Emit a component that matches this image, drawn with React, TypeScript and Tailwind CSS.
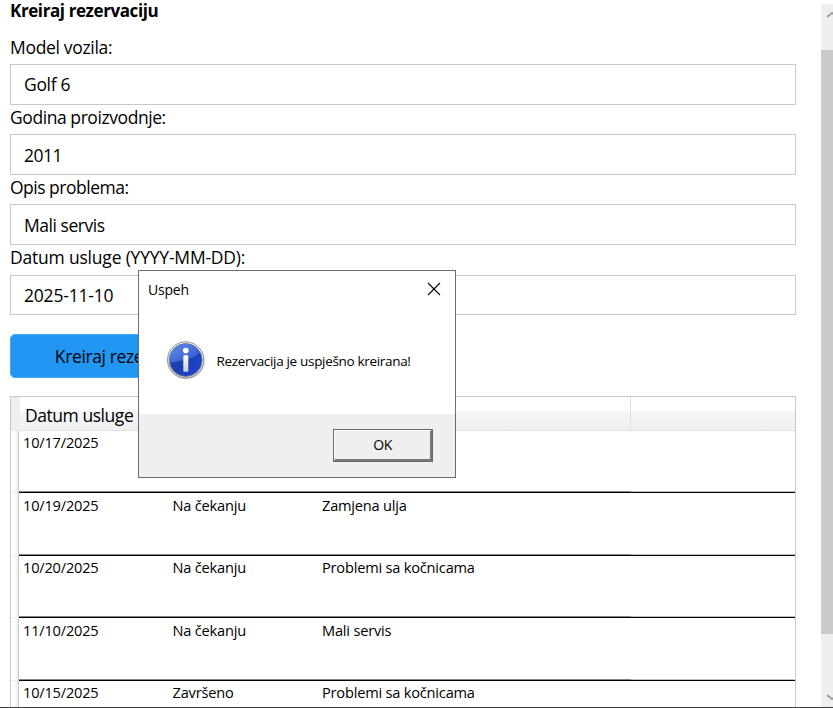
import React from "react";

const fields = [
  { label: "Model vozila:", value: "Golf 6", labelClass: "h-[28px] tracking-[-0.32px]", boxClass: "h-[41px] pb-[1px] tracking-[-0.32px]" },
  { label: "Godina proizvodnje:", value: "2011", labelClass: "h-[29px] pt-[1px] tracking-[-0.43px]", boxClass: "h-[41px] tracking-[-0.5px]" },
  { label: "Opis problema:", value: "Mali servis", labelClass: "h-[29px] pt-[1px] tracking-[-0.5px]", boxClass: "h-[41px] tracking-[-0.45px]" },
  { label: "Datum usluge (YYYY-MM-DD):", value: "2025-11-10", labelClass: "h-[30px] pt-[1px] tracking-[-0.2px]", boxClass: "h-[40px] tracking-[-0.2px]" },
];

const rows = [
  { date: "10/17/2025", status: "Na čekanju", text: "", height: "h-[62px]", pad: "pt-[1px]" },
  { date: "10/19/2025", status: "Na čekanju", text: "Zamjena ulja", height: "h-[63px]", pad: "pt-[2px]" },
  { date: "10/20/2025", status: "Na čekanju", text: "Problemi sa kočnicama", height: "h-[62px]", pad: "pt-[1px]" },
  { date: "11/10/2025", status: "Na čekanju", text: "Mali servis", height: "h-[63px]", pad: "pt-[2px]" },
  { date: "10/15/2025", status: "Završeno", text: "Problemi sa kočnicama", height: "h-[63px]", pad: "pt-[1px]" },
];

function InfoIcon() {
  return (
    <svg className="h-[40px] w-[40px] shrink-0" viewBox="0 0 40 40">
      <defs>
        <linearGradient id="ring" x1="0" y1="0" x2="0" y2="1">
          <stop offset="0" stopColor="#f4f4f4" />
          <stop offset="1" stopColor="#c4c4c4" />
        </linearGradient>
        <linearGradient id="blue" x1="0" y1="0" x2="1" y2="1">
          <stop offset="0" stopColor="#2a56c8" />
          <stop offset="0.5" stopColor="#1a3fae" />
          <stop offset="1" stopColor="#2145d8" />
        </linearGradient>
        <linearGradient id="shine" x1="0" y1="0" x2="1" y2="1">
          <stop offset="0" stopColor="#6490ec" />
          <stop offset="1" stopColor="#2850c4" />
        </linearGradient>
        <linearGradient id="stem" x1="0" y1="0" x2="0" y2="1">
          <stop offset="0" stopColor="#ffffff" />
          <stop offset="1" stopColor="#c9c9cf" />
        </linearGradient>
      </defs>
      <ellipse cx="20.7" cy="21.6" rx="18" ry="17.8" fill="#000" opacity="0.13" />
      <circle cx="19.7" cy="20" r="18.2" fill="url(#ring)" stroke="#858585" strokeWidth="0.9" />
      <circle cx="19.7" cy="20" r="16.4" fill="url(#blue)" stroke="#6a7590" strokeWidth="0.7" />
      <path d="M3.6 22.5A16.2 16.2 0 0 1 34 12.6Q28 20 3.6 22.5Z" fill="url(#shine)" />
      <circle cx="19.8" cy="10.6" r="2.8" fill="#fff" />
      <rect x="17.3" y="15.2" width="5" height="16.6" rx="0.7" fill="url(#stem)" />
    </svg>
  );
}

function Dialog() {
  return (
    <div className="absolute left-[138px] top-[270px] flex h-[208px] w-[318px] flex-col border border-[#6c6c6c] bg-white text-[14px] leading-[20px]">
      <div className="flex h-[37px] items-center justify-between pl-[9px] pr-[14px]">
        <span className="tracking-[-0.2px]">Uspeh</span>
        <svg className="mb-[2px] h-[14px] w-[14px]" viewBox="0 0 14 14" fill="none" stroke="#000" strokeWidth="1.1">
          <path d="M1 1L13 13M13 1L1 13" />
        </svg>
      </div>
      <div className="flex grow items-center pb-[2px] pl-[27px]">
        <InfoIcon />
        <span className="ml-[10.5px] mt-[2px] whitespace-nowrap text-[13.5px] tracking-[-0.32px]">Rezervacija je uspješno kreirana!</span>
      </div>
      <div className="flex h-[63px] justify-end bg-[#efefef] pr-[22px] pt-[15px]">
        <button className="h-[33px] w-[100px] border border-[#696969] bg-[#efefef] p-0">
          <span className="flex h-full items-center justify-center border-b-2 border-l border-r-2 border-t border-b-[#777] border-l-white border-r-[#777] border-t-white text-[14px] tracking-[-0.5px]">
            OK
          </span>
        </button>
      </div>
    </div>
  );
}

export default function App() {
  return (
    <div className="relative flex h-[708px] w-[833px] overflow-hidden border-b border-[#3c3c3c] bg-white font-['Open_Sans','Noto_Sans',sans-serif] text-black">
      <main className="w-[796px] pl-[10px]">
        <h1 className="h-[36px] whitespace-nowrap text-[17px] font-bold leading-[22px] tracking-[-0.4px]">Kreiraj rezervaciju</h1>
        {fields.map((f) => (
          <div key={f.label} className="text-[17.5px] leading-[22px]">
            <div className={`whitespace-nowrap ${f.labelClass}`}>{f.label}</div>
            <div className={`flex items-center border border-[#c8c8c8] pl-[13px] ${f.boxClass}`}>{f.value}</div>
          </div>
        ))}
        <button className="mt-[19px] block h-[44px] w-[229px] rounded-[5px] border border-[#42a5f5] bg-[#2196f3] text-[17.5px] tracking-[-0.38px]">
          Kreiraj rezervaciju
        </button>
        <section className="mt-[18px] h-[400px] border border-[#c8c8c8]">
          <div className="flex h-[34px]">
            <div className="w-[9px] bg-[#efefef]" />
            <div className="flex grow border-b border-[#dfe0e2] bg-[linear-gradient(to_bottom,#fff_0,#fff_14px,#f5f6f8_14px,#eff0f2_100%)] text-[17.5px] leading-[36px] tracking-[-0.45px]">
              <div className="w-[149px] pl-[5px]">Datum usluge</div>
              <div className="w-[150px] pl-[5px]">Status</div>
              <div className="w-[312px] border-r border-[#dfe0e2] pl-[5px]">Opis problema</div>
            </div>
          </div>
          {rows.map((r) => (
            <div key={r.date} className={`flex text-[14.6px] leading-[20px] ${r.height}`}>
              <div className="w-[8px] border-b border-r border-[#c8c8c8] border-b-[#ececec] bg-[linear-gradient(to_right,#fff_40%,#efefef)]" />
              <div className="flex grow flex-col border-b border-black">
                <div className={`flex grow tracking-[-0.2px] ${r.pad}`}>
                  <span className="w-[149px] pl-[4px]">{r.date}</span>
                  <span className="w-[150px] pl-[4.5px]">{r.status}</span>
                  <span className="w-[312px] pl-[4px]">{r.text}</span>
                </div>
                <div className="flex h-px">
                  <div className="w-[612px] bg-[#848484]" />
                  <div className="grow bg-[#c0c0c0]" />
                </div>
              </div>
            </div>
          ))}
        </section>
      </main>
      <aside className="ml-[25px] mt-[4px] flex w-[12px] flex-col bg-[#efefef]">
        <div className="h-[46px] overflow-hidden">
          <svg className="ml-[5px] mt-[7px] h-[8px] w-[12px]" viewBox="0 0 12 8" fill="none" stroke="#a0a0a0" strokeWidth="2">
            <path d="M1 6L6 2L11 6" />
          </svg>
        </div>
        <div className="h-[584px] bg-[#cbcbcb]" />
        <div className="grow overflow-hidden">
          <svg className="ml-[5px] mt-[59px] h-[8px] w-[12px]" viewBox="0 0 12 8" fill="none" stroke="#a0a0a0" strokeWidth="2">
            <path d="M1 2L6 6L11 2" />
          </svg>
        </div>
      </aside>
      <Dialog />
    </div>
  );
}
